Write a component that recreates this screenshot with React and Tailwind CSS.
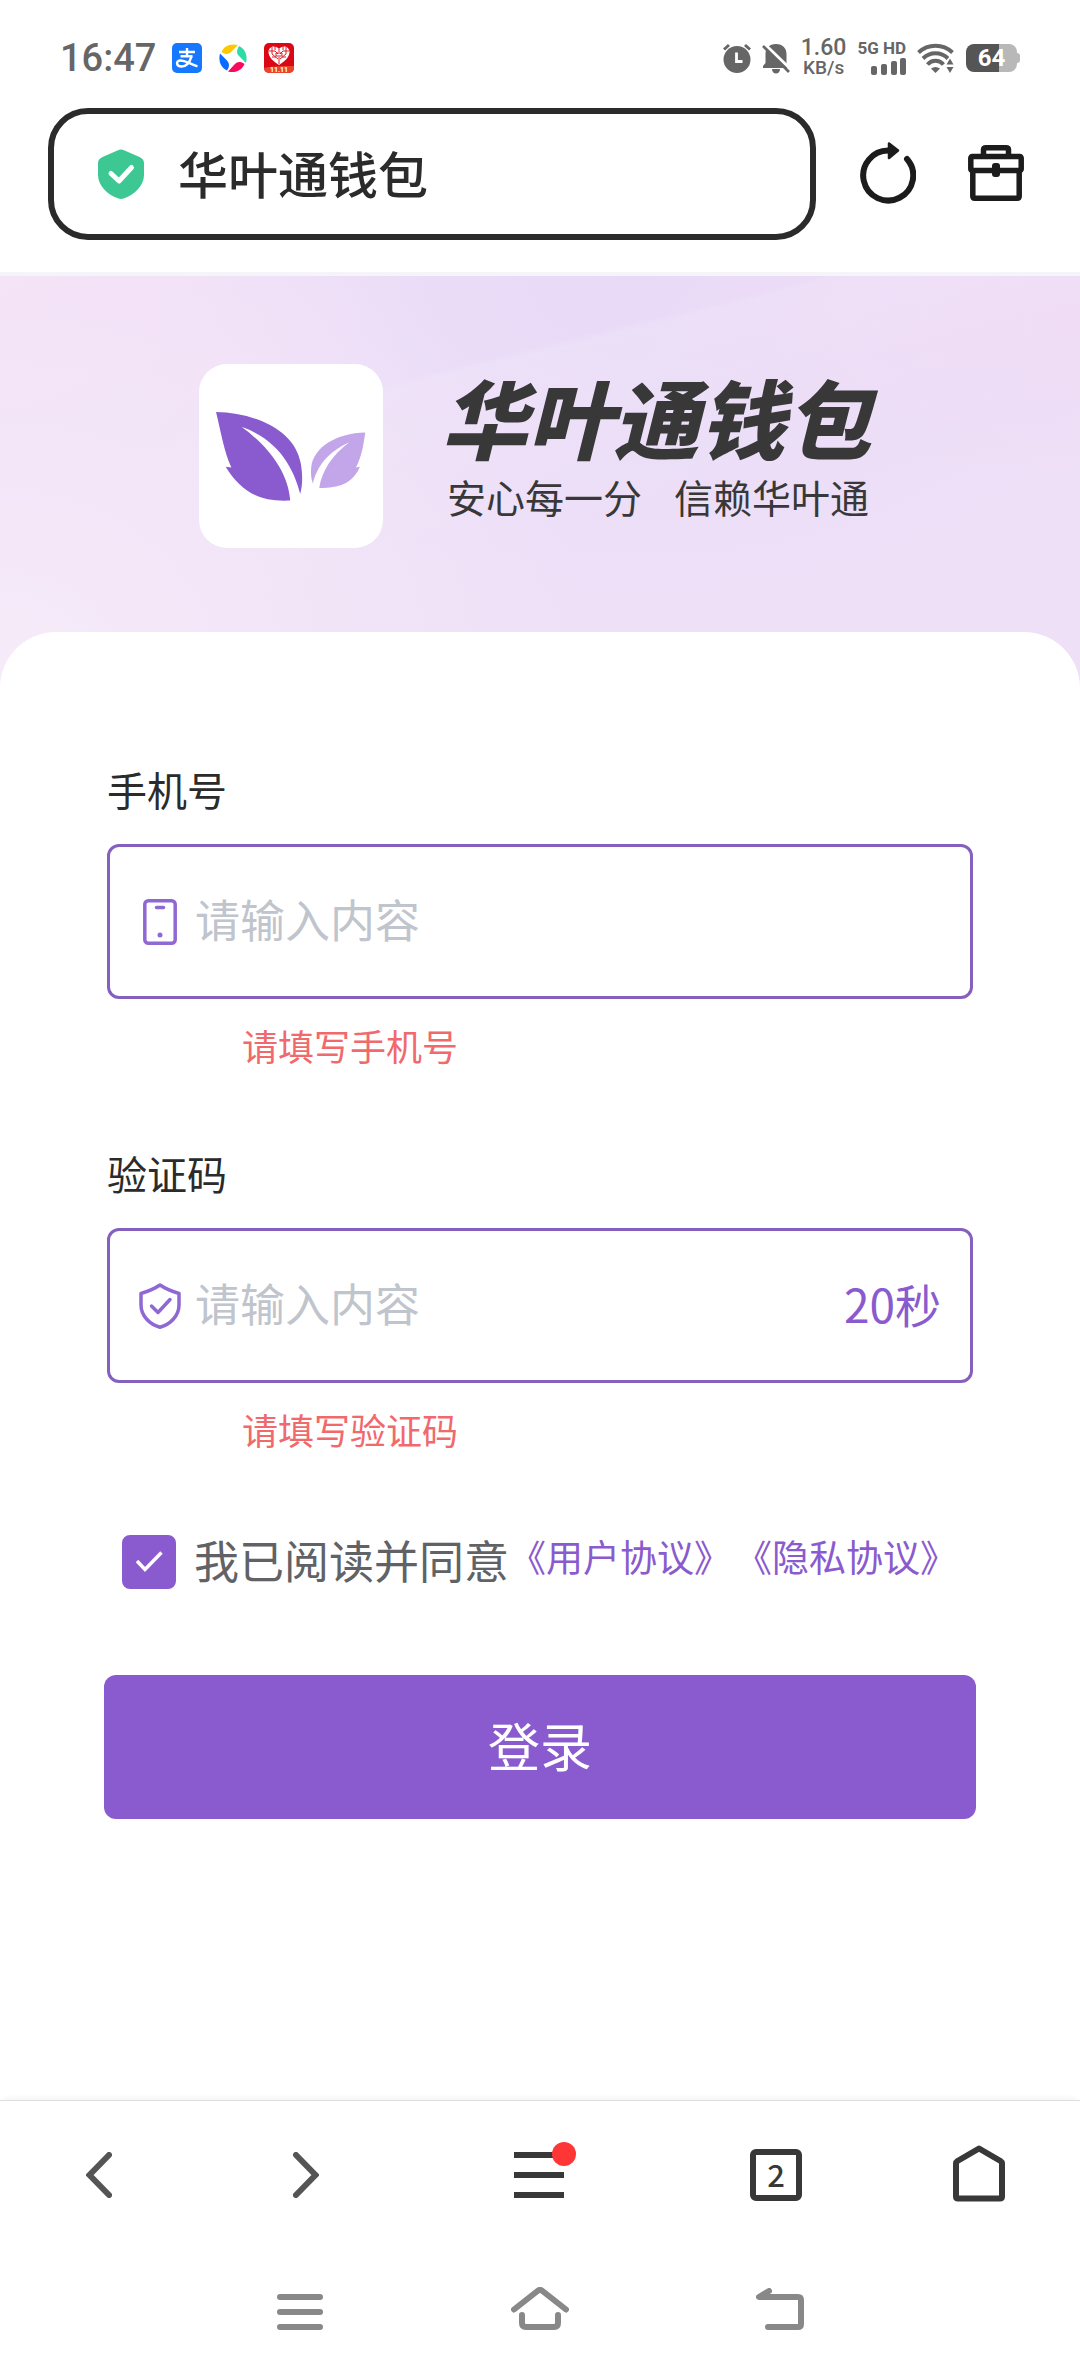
import React, { useState } from "react";

const SANS = "font-['Noto_Sans_CJK_SC',sans-serif]";

function AlipayIcon() {
  return (
    <svg viewBox="0 0 30 30" className="size-[30px]" aria-hidden="true">
      <rect width="30" height="30" rx="5" fill="#1677ff" />
      <g fill="none" stroke="#fff" strokeWidth="2.400">
        <path d="M7 9h16M15 5v8.500M8.500 13.200h12" />
        <path d="M19.500 13.300c-1.500 5-5 10.200-10 10.200-5.500 0-6-6-1-6 5 0 8.500 3.200 17 5.800" />
      </g>
    </svg>
  );
}

function SwirlIcon() {
  return (
    <svg viewBox="0 0 30 30" className="size-[30px]" aria-hidden="true">
      <path d="M3.500 9C6 3 12 0 20 2L14 8C11 11.500 8 12 3.500 9Z" fill="#ffc800" />
      <path d="M21 3C27 6 30 12 28 20L22 14C18.500 11 18 8 21 3Z" fill="#2edba5" />
      <path d="M26.500 21C24 27 18 30.500 10 28.500L16 22C19 18.500 22 18 26.500 21Z" fill="#fa0a5c" />
      <path d="M9 27.500C3 25 0 18 2 10.500L8 16.500C11.500 20 12 23 9 27.500Z" fill="#0a6cff" />
    </svg>
  );
}

function HeartAppIcon() {
  return (
    <svg viewBox="0 0 30 30" className="size-[30px]" aria-hidden="true">
      <rect width="30" height="30" rx="5" fill="#dc0714" />
      <path d="M0 25c9-2 21-2 30-2v2a5 5 0 0 1-5 5H5a5 5 0 0 1-5-5Z" fill="#e8452a" />
      <path d="M15 22C9 18 4.500 14 4.500 9 4.500 3 12 1.500 15 6 18 1.500 25.500 3 25.500 9 25.500 14 21 18 15 22Z" fill="#fff" />
      <path
        d="M5 8h6l3 3M8 4v7l6 5M22 4v7l-6 5M25 8h-6l-3 3M11 3v4M19 3v4M8 14h4M18 14h4M15 6v3M15 14v7M12 10h6v3h-6Z"
        fill="none"
        stroke="#dc0714"
        strokeWidth="0.900"
      />
      <text x="15" y="28.500" textAnchor="middle" fontSize="7" fontWeight="700" fontFamily="Roboto, sans-serif" fill="#fff">
        11.11
      </text>
    </svg>
  );
}

function AlarmIcon() {
  return (
    <svg viewBox="0 0 28 30" className="h-[30px] w-7" aria-hidden="true">
      <circle cx="14" cy="16.500" r="13.500" fill="#666" />
      <path d="M1 6.500 6 2M27 6.500 22 2" stroke="#666" strokeWidth="3" fill="none" />
      <path d="M13.500 9.500v9h6" stroke="#fff" strokeWidth="2.800" fill="none" />
    </svg>
  );
}

function BellOffIcon() {
  return (
    <svg viewBox="0 0 28 31" className="h-[31px] w-7" aria-hidden="true">
      <path d="M14 1c7 0 10.500 4.500 10.500 10v10l2.500 4H1v-2l2.500-3v-9C3.500 5.500 7 1 14 1ZM10 26h8c0 6-8 6-8 0Z" fill="#666" />
      <path d="M2.500 1 29 26.500" stroke="#fff" strokeWidth="3" />
      <path d="M1 3 27 29" stroke="#666" strokeWidth="2.600" />
    </svg>
  );
}

function SignalBars() {
  return (
    <svg viewBox="0 0 36 17" className="h-[17px] w-9" aria-hidden="true">
      <g fill="#666">
        <rect x="1" y="8" width="6" height="9" rx="2" />
        <rect x="11" y="6" width="6" height="11" rx="2" />
        <rect x="21" y="3" width="6" height="14" rx="2" />
        <rect x="30" y="0" width="6" height="17" rx="2" />
      </g>
    </svg>
  );
}

function WifiIcon() {
  return (
    <svg viewBox="0 0 38 30" className="h-[30px] w-[38px]" aria-hidden="true">
      <g fill="none" stroke="#666" strokeWidth="4">
        <path d="M1.500 9.500C11 .5 26 .5 35.500 9.500" />
        <path d="M6 15.500C13 8.500 24 8.500 31 15.500" />
        <path d="M10.500 21.500C15 16.500 22 16.500 26.500 21.500" />
      </g>
      <path d="M14 25.500c3-2 6-2 9 0L18.500 30Z" fill="#666" />
      <path d="M33 13l5.500 8.500-5.500 8.500-5.500-8.500Z" fill="#fff" />
      <path d="M33 15.500l3.500 6h-7ZM33 30l3.500-6h-7Z" fill="#666" />
    </svg>
  );
}

function Battery() {
  return (
    <div className="flex items-center">
      <div className="flex h-7 w-[51px] items-center justify-center rounded-lg bg-linear-to-r from-[#555] from-65% to-[#b8b8b8] to-65% font-['Roboto',sans-serif] text-[24px] leading-none font-bold text-white">
        64
      </div>
      <div className="h-2.5 w-[3px] rounded-r-sm bg-[#b8b8b8]" />
    </div>
  );
}

function StatusBar() {
  return (
    <div className="flex h-[108px] items-center justify-between px-15 pt-2 font-['Roboto',sans-serif] text-[#666]">
      <div className="flex items-center gap-4">
        <time className="text-[38px] leading-none font-medium">16:47</time>
        <AlipayIcon />
        <SwirlIcon />
        <HeartAppIcon />
      </div>
      <div className="flex items-center gap-[11px]">
        <AlarmIcon />
        <BellOffIcon />
        <div className="flex flex-col items-center font-medium">
          <span className="text-[23px] leading-5">1.60</span>
          <span className="text-[19px] leading-5">KB/s</span>
        </div>
        <div className="flex flex-col items-end gap-1">
          <span className="text-[17px] leading-3 font-bold">5G HD</span>
          <SignalBars />
        </div>
        <WifiIcon />
        <Battery />
      </div>
    </div>
  );
}

function AddressBar() {
  return (
    <div className="flex items-center border-b-4 border-[#f5f4f8] pr-14 pb-8 pl-12">
      <div className="flex h-[132px] min-w-0 flex-1 items-center gap-[34px] rounded-[40px] border-6 border-[#2b2b2b] pr-8 pl-11">
        <svg viewBox="0 0 46 50" className="h-[50px] w-[46px] shrink-0" aria-hidden="true">
          <path
            d="M20 1.200Q23 0 26 1.200L41.500 8Q46 10 46 14V26C46 37 36 46 25.500 49.500Q23 50.400 20.500 49.500C10 46 0 37 0 26V14Q0 10 4.500 8Z"
            fill="#3cc793"
          />
          <path d="M13 24.500 21 32 33.500 18.500" fill="none" stroke="#fff" strokeWidth="5" strokeLinecap="round" strokeLinejoin="round" />
        </svg>
        <input
          aria-label="地址栏"
          defaultValue="华叶通钱包"
          className="h-full w-full min-w-0 bg-transparent pb-1 text-[50px] font-medium text-[#2b2b2b] outline-none"
        />
      </div>
      <button type="button" aria-label="刷新" className="ml-11 pb-0.5">
        <svg viewBox="0 0 56 62" className="h-[62px] w-14">
          <path d="M47 17A25 25 0 1 1 29 8.500" fill="none" stroke="#1c1c1c" strokeWidth="6" strokeLinecap="round" />
          <path d="M29 1.500 38 8.500 29 16Z" fill="#1c1c1c" stroke="#1c1c1c" strokeWidth="2.500" strokeLinejoin="round" />
        </svg>
      </button>
      <button type="button" aria-label="工具箱" className="ml-[52px] pb-0.5">
        <svg viewBox="0 0 56 56" className="size-14" fill="none" stroke="#1c1c1c" strokeWidth="5.500" strokeLinejoin="round">
          <path d="M15.500 10V5Q15.500 2.800 18 2.800H38Q40.500 2.800 40.500 5V10" />
          <rect x="2.800" y="11.500" width="50.400" height="14" rx="1.500" />
          <path d="M4.800 26V51.200Q4.800 53.200 6.800 53.200H49.200Q51.200 53.200 51.200 51.200V26" />
          <rect x="24" y="18" width="8" height="14" rx="3" fill="#1c1c1c" stroke="none" />
        </svg>
      </button>
    </div>
  );
}

function LeafLogo() {
  return (
    <div className="size-[184px] shrink-0 overflow-hidden rounded-[28px] bg-white">
      <svg viewBox="57 41 551 551" className="size-full" role="img" aria-label="双叶标志">
        <path
          d="M108 185C230 188 345 240 362 340C368 378 367 405 360 430C345 370 305 270 185 230C262 285 325 365 330 450C235 455 180 420 137 349L154 351C132 305 124 250 108 185Z"
          fill="#8a5bce"
        />
        <path
          d="M555 246C468 248 400 290 393 350C391 370 393 385 398 399C410 350 440 305 507 275C455 315 425 360 417 412C480 415 520 395 539 349L527 351C545 315 548 290 555 246Z"
          fill="#c3a6ea"
        />
      </svg>
    </div>
  );
}

function Hero() {
  return (
    <header className="flex items-center justify-center gap-[58px] bg-[#eee0f7] bg-[radial-gradient(ellipse_55%_130%_at_0%_100%,#f6ecf8_0%,#f3e6f8_40%,transparent_100%),radial-gradient(ellipse_40%_90%_at_0%_0%,#f6e1f7_0%,transparent_100%),linear-gradient(166deg,transparent_30%,rgba(255,255,255,0.12)_31%,transparent_60%),radial-gradient(ellipse_at_100%_10%,#efdaf5_0%,transparent_30%),radial-gradient(ellipse_at_60%_0%,#e8daf7_0%,transparent_55%)] pt-[88px] pb-[140px]">
      <LeafLogo />
      <div className="min-w-[440px] pb-4 text-[#383838]">
        <h1 className="text-[86px] leading-20 font-black whitespace-nowrap italic">华叶通钱包</h1>
        <p className="mt-4 flex gap-8 pl-1.5 text-[39px] leading-12 whitespace-nowrap">
          <span>安心每一分</span>
          <span>信赖华叶通</span>
        </p>
      </div>
    </header>
  );
}

function PhoneIcon() {
  return (
    <svg viewBox="0 0 42 46" className="h-[46px] w-[42px] shrink-0" fill="none" stroke="#9068d4" strokeWidth="3.500" aria-hidden="true">
      <rect x="5.800" y="1.800" width="30.400" height="42.400" rx="3.500" />
      <path d="M17.500 8.500h7" strokeLinecap="round" />
      <circle cx="21" cy="36" r="2.500" fill="#9068d4" stroke="none" />
    </svg>
  );
}

function ShieldIcon() {
  return (
    <svg viewBox="0 0 42 46" className="h-[46px] w-[42px] shrink-0" fill="none" stroke="#9068d4" strokeWidth="3.500" strokeLinejoin="round" strokeLinecap="round" aria-hidden="true">
      <path d="M21 2C27 6 33 8.500 40 10.500V22C40 33 31 41.500 21 44.200C11 41.500 2 33 2 22V10.500C9 8.500 15 6 21 2Z" />
      <path d="M12.500 23 19 29.500 31 16.500" />
    </svg>
  );
}

function Field({ id, label, icon, error, suffix }) {
  return (
    <div>
      <label htmlFor={id} className="block text-[40px] leading-[52px] text-[#2b2b2b]">
        {label}
      </label>
      <div className="mt-[29px] flex h-[155px] items-center gap-3.5 rounded-xl border-3 border-[#8660bf] px-[29px]">
        {icon}
        <input
          id={id}
          placeholder="请输入内容"
          aria-describedby={id + "-error"}
          className="h-full min-w-0 flex-1 bg-transparent pb-1.5 text-[45px] text-[#606266] outline-none placeholder:text-[#c0c4cc]"
        />
        {suffix}
      </div>
      <p id={id + "-error"} className="mt-[22px] pl-[135px] text-[36px] leading-12 text-[#f0696c]">
        {error}
      </p>
    </div>
  );
}

function LoginForm() {
  const [agreed, setAgreed] = useState(true);
  return (
    <form className="px-[104px] pt-[131px]" onSubmit={(e) => e.preventDefault()}>
      <div className="flex flex-col gap-[78px] px-[3px]">
        <Field id="phone" label="手机号" icon={<PhoneIcon />} error="请填写手机号" />
        <Field
          id="code"
          label="验证码"
          icon={<ShieldIcon />}
          error="请填写验证码"
          suffix={
            <button type="button" className="pb-1.5 text-[46px] leading-none text-[#8a5bce]">
              20秒
            </button>
          }
        />
      </div>
      <div className="mt-[82px] flex items-center pl-[18px] whitespace-nowrap">
        <label className="flex items-center gap-[18px] text-[45px] text-[#606266]">
          <span className="relative size-[54px]">
            <input
              type="checkbox"
              checked={agreed}
              onChange={(e) => setAgreed(e.target.checked)}
              className="peer block size-full appearance-none rounded-lg border-2 border-[#8a5bce] checked:bg-[#8a5bce]"
            />
            <svg viewBox="0 0 54 54" className="pointer-events-none absolute inset-0 hidden size-full peer-checked:block" aria-hidden="true">
              <path d="M15 26 23 34.500 39.500 17.500" fill="none" stroke="#fff" strokeWidth="3.500" />
            </svg>
          </span>
          <span className="pb-1 leading-[50px]">我已阅读并同意</span>
        </label>
        <span className="flex gap-1 pb-3 text-[37px] leading-[42px] text-[#8a5bce]">
          <a href="#user-agreement">《用户协议》</a>
          <a href="#privacy-agreement">《隐私协议》</a>
        </span>
      </div>
      <button type="submit" className="mt-[86px] block h-36 w-full rounded-xl bg-[#8a5bce] pb-1 text-[52px] leading-none text-white">
        登录
      </button>
    </form>
  );
}

function BrowserNav() {
  return (
    <nav
      aria-label="浏览器"
      className="grid h-[148px] grid-cols-[198fr_216fr_250fr_224fr_182fr] place-items-center border-t border-[#dedede] bg-white pr-2.5 shadow-[0_-6px_6px_-4px_rgba(0,0,0,0.05)]"
    >
      <button type="button" aria-label="后退">
        <svg viewBox="0 0 26 46" className="h-[46px] w-[26px]" fill="none" stroke="#555" strokeWidth="6" strokeLinecap="round">
          <path d="M23 3 3.500 23 23 43" />
        </svg>
      </button>
      <button type="button" aria-label="前进">
        <svg viewBox="0 0 26 46" className="h-[46px] w-[26px]" fill="none" stroke="#555" strokeWidth="6" strokeLinecap="round">
          <path d="M3 3 22.500 23 3 43" />
        </svg>
      </button>
      <button type="button" aria-label="菜单" className="relative">
        <svg viewBox="0 0 50 46" className="h-[46px] w-[50px]" stroke="#383838" strokeWidth="6">
          <path d="M0 3h50M0 23h50M0 43h50" />
        </svg>
        <span className="absolute -top-2.5 -right-3 size-6 rounded-full bg-[#ff3636]" />
      </button>
      <button
        type="button"
        aria-label="标签页"
        className="flex size-[52px] items-center justify-center rounded-md border-6 border-[#383838] pb-0.5 text-[31px] leading-none font-medium text-[#383838]"
      >
        2
      </button>
      <button type="button" aria-label="主页">
        <svg viewBox="0 0 52 60" className="h-15 w-13" fill="none" stroke="#383838" strokeWidth="6" strokeLinejoin="round">
          <path d="M3 18.500Q3 17 4.500 16L26 3.500 47.500 16Q49 17 49 18.500V51.500Q49 53.500 47 53.500H5Q3 53.500 3 51.500Z" />
        </svg>
      </button>
    </nav>
  );
}

function SystemNav() {
  return (
    <nav aria-label="系统" className="mx-auto grid h-32 w-2/3 grid-cols-3 place-items-center">
      <button type="button" aria-label="最近任务">
        <svg viewBox="0 0 46 44" className="h-11 w-[46px]" stroke="#888" strokeWidth="6" strokeLinecap="round">
          <path d="M3 7h40M3 22h40M3 37h40" />
        </svg>
      </button>
      <button type="button" aria-label="桌面">
        <svg viewBox="0 0 58 50" className="h-[50px] w-[58px]" fill="none" stroke="#888" strokeWidth="6" strokeLinecap="round" strokeLinejoin="round">
          <path d="M3 22.500 26.500 4Q29 2 31.500 4L55 22.500" />
          <path d="M11 28V36Q11 40 15 40H43Q47 40 47 36V28" />
        </svg>
      </button>
      <button type="button" aria-label="返回">
        <svg viewBox="0 0 48 48" className="size-12" fill="none" stroke="#888" strokeWidth="6" strokeLinecap="round" strokeLinejoin="round">
          <path d="M13 3 3 9H42Q45 9 45 12V36Q45 39 42 39H12" />
        </svg>
      </button>
    </nav>
  );
}

export default function App() {
  return (
    <div className={"flex min-h-screen flex-col bg-white " + SANS}>
      <StatusBar />
      <AddressBar />
      <main className="flex-1">
        <Hero />
        <section className="-mt-14 rounded-t-[56px] bg-white pb-14">
          <LoginForm />
        </section>
      </main>
      <BrowserNav />
      <SystemNav />
    </div>
  );
}
